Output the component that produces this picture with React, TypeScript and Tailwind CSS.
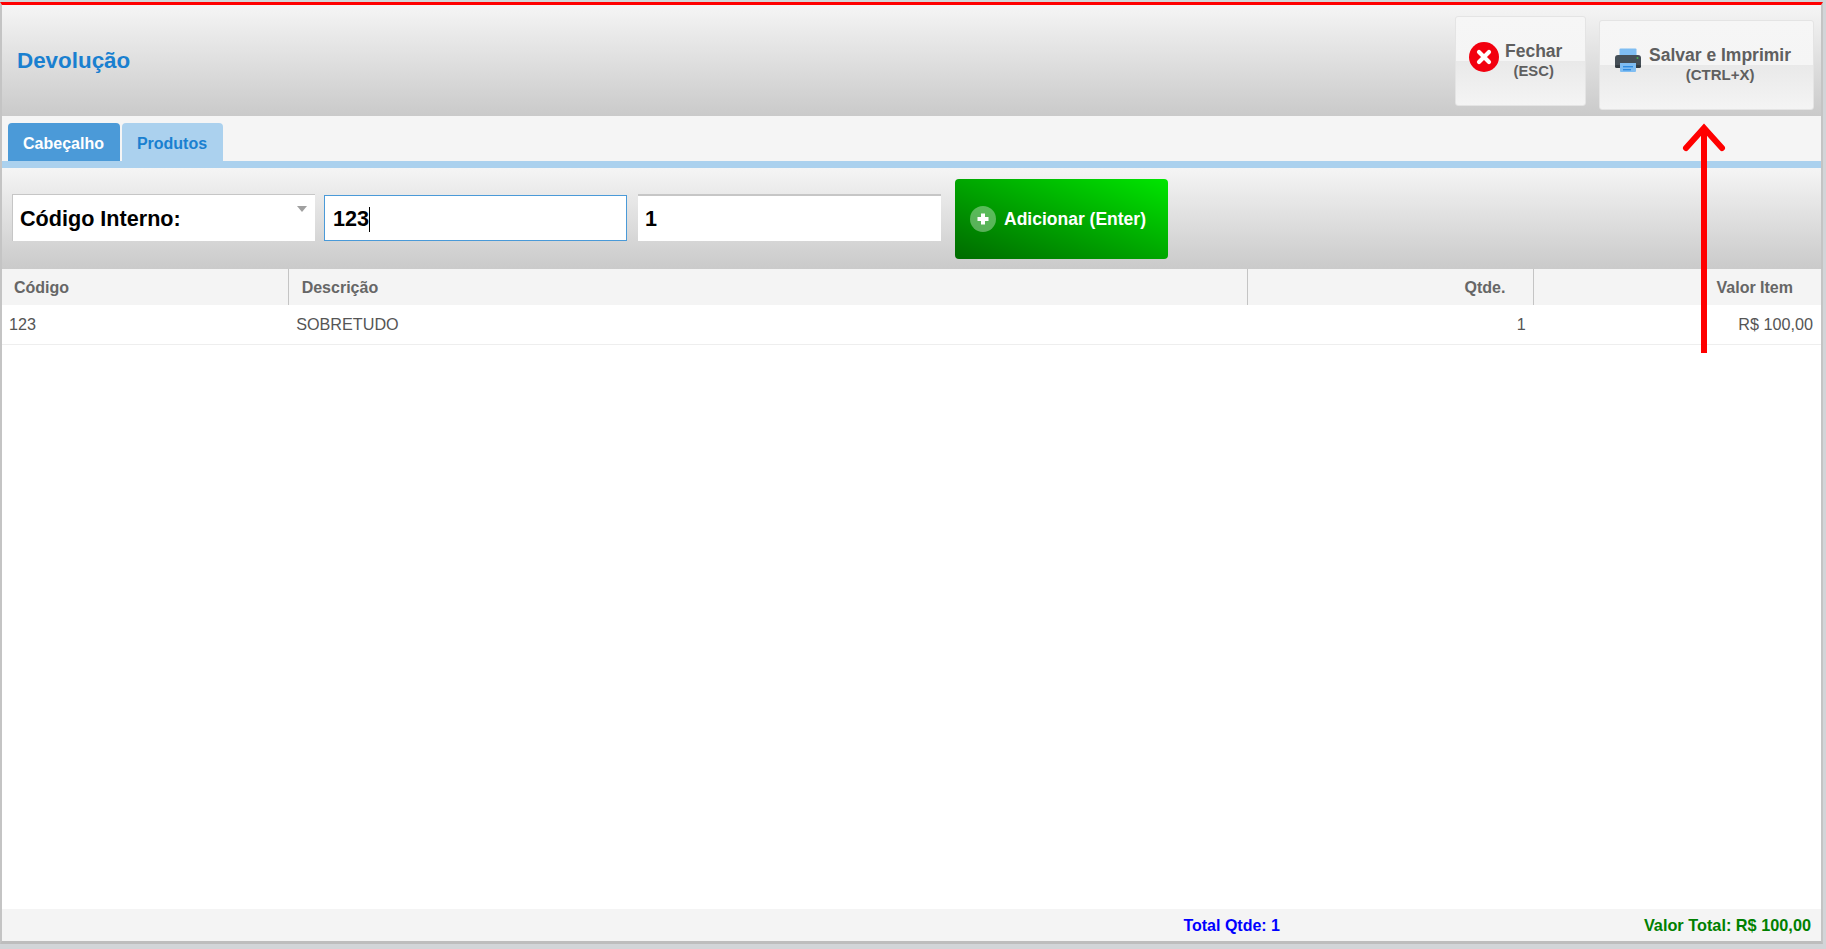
const columns = [
  { label: 'Código', width: 'w-[286px]', head: 'text-left pl-3 pr-2', cell: 'text-left pl-[7px] pr-2', value: '123' },
  { label: 'Descrição', width: 'w-[959px]', head: 'text-left pl-[13px] pr-2 border-l border-[#c4c4c4]', cell: 'text-left pl-2 pr-2', value: 'SOBRETUDO' },
  { label: 'Qtde.', width: 'w-[286px]', head: 'text-right pr-7 border-l border-[#c4c4c4]', cell: 'text-right pr-2', value: '1' },
  { label: 'Valor Item', width: 'w-[287px]', head: 'text-right pr-7 border-l border-[#c4c4c4]', cell: 'text-right pr-2', value: 'R$ 100,00' },
];

const CloseIcon = () => (
  <svg width="30" height="30" viewBox="0 0 30 30" className="shrink-0">
    <circle cx="15" cy="15" r="15" fill="#f2000f" />
    <path d="M10 10l10 10M20 10L10 20" stroke="#fff" strokeWidth="4.2" strokeLinecap="round" />
  </svg>
);

const PrinterIcon = () => (
  <svg width="26" height="26" viewBox="0 0 26 26" className="shrink-0">
    <path d="M4.5 1.5a1 1 0 0 1 1-1h15a1 1 0 0 1 1 1V8h-17z" fill="#7fbdf2" />
    <path d="M3 7h20a3 3 0 0 1 3 3v9H0v-9a3 3 0 0 1 3-3z" fill="#454f57" />
    <rect x="0" y="17" width="26" height="3" rx="1.5" fill="#343c42" />
    <circle cx="22.5" cy="10" r="1" fill="#4caf50" />
    <path d="M5 15h16v8a1 1 0 0 1-1 1H6a1 1 0 0 1-1-1z" fill="#7fbdf2" />
    <rect x="8" y="18" width="10" height="1.4" fill="#2f8be0" />
    <rect x="8" y="21" width="8" height="1.4" fill="#2f8be0" />
  </svg>
);

const PlusIcon = () => (
  <svg width="26" height="26" viewBox="0 0 26 26" className="shrink-0">
    <circle cx="13" cy="13" r="13" fill="#ffffff" fillOpacity="0.35" />
    <path d="M13 7.5v11M7.5 13h11" stroke="#fff" strokeWidth="4" />
  </svg>
);

const glossy =
  'bg-[linear-gradient(to_bottom,#f6f6f6_0%,#f5f5f5_50%,#e9e9e9_50%,#f4f4f4_100%)] border border-[#e4e4e4] rounded-[3px]';

export default function App() {
  return (
    <div className="relative w-[1826px] h-[949px] overflow-hidden bg-[#d2d5d8] font-['Liberation_Sans',Arial,sans-serif]">
      <div className="ml-0 mr-[3px] mt-[2px] h-[942px] flex flex-col bg-white border-t-[3px] border-[#ff0000] border-b-[3px] border-b-[#bdbdbd] border-x-[2px] border-x-[#c4c4c4]">
        <header className="h-[111px] shrink-0 flex items-center justify-between bg-gradient-to-b from-[#f5f5f5] to-[#cacaca]">
          <h1 className="pl-[15px] text-[22.4px] font-bold text-[#1a80d0]">Devolução</h1>
          <div className="flex items-start gap-[13px] pr-[7px] self-start">
            <button className={`${glossy} mt-[11px] w-[131px] h-[90px] flex items-center pl-[13px] gap-[6px]`}>
              <span className="-mt-[8px]">
                <CloseIcon />
              </span>
              <span className="flex flex-col items-center leading-[20px] font-bold text-[#5f5f5f]">
                <span className="text-[17.5px]">Fechar</span>
                <span className="text-[14.8px]">(ESC)</span>
              </span>
            </button>
            <button className={`${glossy} mt-[15px] w-[215px] h-[90px] flex items-center pl-[15px] gap-[8px]`}>
              <span className="-mt-[8px]">
                <PrinterIcon />
              </span>
              <span className="flex flex-col items-center leading-[20px] font-bold text-[#5f5f5f]">
                <span className="text-[17.5px]">Salvar e Imprimir</span>
                <span className="text-[15px]">(CTRL+X)</span>
              </span>
            </button>
          </div>
        </header>

        <nav className="h-[52px] shrink-0 bg-[#f5f5f5] flex flex-col justify-end">
          <div className="flex gap-[2px] pl-[6px]">
            <div className="w-[112px] h-[38px] pt-[3px] pr-[1px] rounded-t-[4px] bg-[#4b9ad8] flex items-center justify-center text-[16px] font-bold text-white">
              Cabeçalho
            </div>
            <div className="w-[101px] h-[38px] pt-[3px] pr-[1px] rounded-t-[4px] bg-[#abd1ee] flex items-center justify-center text-[16px] font-bold text-[#1a80d0]">
              Produtos
            </div>
          </div>
          <div className="h-[7px] bg-[#abd1ee]" />
        </nav>

        <section className="h-[101px] shrink-0 flex items-start bg-gradient-to-b from-[#f5f5f5] to-[#cacaca] pl-[10px]">
          <div className="mt-[26px] relative w-[303px] h-[47px] pt-[2px] bg-white border-t border-l border-[#c6c6c6] flex items-center pl-[7px] text-[21.6px] font-bold text-black">
            Código Interno:
            <span className="absolute right-[8px] top-[11px] w-0 h-0 border-l-[5px] border-r-[5px] border-t-[6px] border-l-transparent border-r-transparent border-t-[#a0a0a0]" />
          </div>
          <div className="mt-[27px] ml-[9px] w-[303px] h-[46px] pt-[2px] bg-white border border-[#4a9ad8] flex items-center pl-2 text-[21.6px] font-bold text-black">
            123<span className="w-px h-[25px] bg-black" />
          </div>
          <div className="mt-[26px] ml-[11px] w-[303px] h-[47px] pt-[2px] bg-white border-t-2 border-[#c6c6c6] flex items-center pl-[7px] text-[21.6px] font-bold text-black">
            1
          </div>
          <button className="mt-[11px] ml-[14px] w-[213px] h-[80px] rounded-[4px] bg-gradient-to-tr from-[#006b00] to-[#00e600] flex items-center pl-[15px] gap-[8px] text-[17.5px] font-bold text-white">
            <PlusIcon />
            Adicionar (Enter)
          </button>
        </section>

        <table className="w-full table-fixed border-collapse shrink-0 text-[16px]">
          <thead>
            <tr className="h-[36px] bg-[#f4f4f4] text-[#666666] font-bold">
              {columns.map((col) => (
                <th key={col.label} className={`${col.width} ${col.head} font-bold pt-[2px]`}>
                  {col.label}
                </th>
              ))}
            </tr>
          </thead>
          <tbody>
            <tr className="h-[39px] border-b border-[#eeeeee] text-[#555555] text-[16.2px]">
              {columns.map((col) => (
                <td key={col.label} className={col.cell}>
                  {col.value}
                </td>
              ))}
            </tr>
          </tbody>
        </table>

        <div className="flex-1" />

        <footer className="h-[32px] shrink-0 bg-[#f4f4f4] flex items-center text-[16px] font-bold">
          <span className="w-[1278px] pt-[2px] text-right text-[#0000ff]">Total Qtde: 1</span>
          <span className="flex-1 text-right pr-[10px] text-[16.3px] text-[#008000]">Valor Total: R$ 100,00</span>
        </footer>
      </div>

      <svg width="60" height="240" viewBox="0 0 60 240" className="absolute left-[1674px] top-[120px]">
        <path d="M30 233V8" stroke="#ff0000" strokeWidth="6" fill="none" />
        <path d="M12 28L30 8l18 20" stroke="#ff0000" strokeWidth="6" strokeLinecap="round" fill="none" />
      </svg>
    </div>
  );
}
